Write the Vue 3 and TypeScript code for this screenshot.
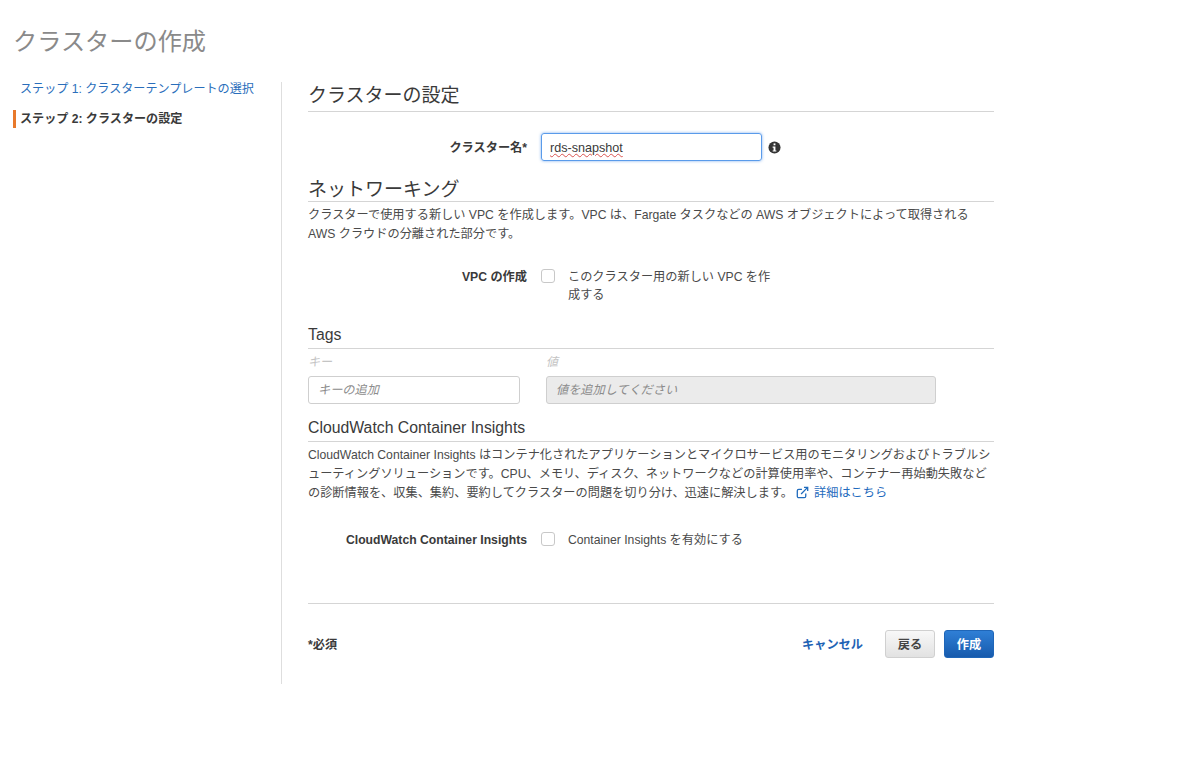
<script setup lang="ts">
import { ref } from 'vue'

const vpcChecked = ref(false)
const insightsChecked = ref(false)
</script>

<template>
  <div class="page">
    <h1 class="page-title">クラスターの作成</h1>
    <div class="wizard">
      <nav class="steps">
        <a class="step link">ステップ 1: クラスターテンプレートの選択</a>
        <div class="step current">ステップ 2: クラスターの設定</div>
      </nav>

      <main class="content">
        <h2 class="section-title first">クラスターの設定</h2>
        <div class="form-row name-row">
          <label class="row-label">クラスター名*</label>
          <div class="name-input"><span class="misspelled">rds-snapshot</span></div>
          <svg class="info" viewBox="0 0 14 14" width="13" height="13">
            <circle cx="7" cy="7" r="6.5" fill="#333" />
            <rect x="6" y="2.6" width="2" height="2" fill="#fff" />
            <path d="M5 6h3v4.2h1v1.2H5v-1.2h1V7.2H5z" fill="#fff" />
          </svg>
        </div>

        <h2 class="section-title network">ネットワーキング</h2>
        <p class="desc">クラスターで使用する新しい VPC を作成します。VPC は、Fargate タスクなどの AWS オブジェクトによって取得される AWS クラウドの分離された部分です。</p>
        <div class="form-row vpc-row">
          <label class="row-label">VPC の作成</label>
          <span class="checkbox" :class="{ on: vpcChecked }" @click="vpcChecked = !vpcChecked"></span>
          <span class="check-text">このクラスター用の新しい VPC を作成する</span>
        </div>

        <h3 class="sub-title tags">Tags</h3>
        <div class="tag-grid">
          <div class="tag-key">
            <div class="tag-label">キー</div>
            <input class="text-input" placeholder="キーの追加" />
          </div>
          <div class="tag-value">
            <div class="tag-label">値</div>
            <input class="text-input" placeholder="値を追加してください" disabled />
          </div>
        </div>

        <h3 class="sub-title insights">CloudWatch Container Insights</h3>
        <p class="desc">CloudWatch Container Insights はコンテナ化されたアプリケーションとマイクロサービス用のモニタリングおよびトラブルシューティングソリューションです。CPU、メモリ、ディスク、ネットワークなどの計算使用率や、コンテナー再始動失敗などの診断情報を、収集、集約、要約してクラスターの問題を切り分け、迅速に解決します。<a class="more"><svg viewBox="0 0 14 14" width="13" height="13" fill="none" stroke="#1f6bbd" stroke-width="1.4">
              <path d="M10.5 8v3a1.6 1.6 0 0 1-1.6 1.6H3A1.6 1.6 0 0 1 1.4 11V5.2A1.6 1.6 0 0 1 3 3.6h3.4" />
              <path d="M5.5 8.6 12 2M8.6 1.4h4v4" />
            </svg><span>詳細はこちら</span></a></p>
        <div class="form-row insights-row">
          <label class="row-label">CloudWatch Container Insights</label>
          <span class="checkbox" :class="{ on: insightsChecked }" @click="insightsChecked = !insightsChecked"></span>
          <span class="check-text">Container Insights を有効にする</span>
        </div>

        <footer class="actions">
          <span class="required">*必須</span>
          <div class="buttons">
            <a class="cancel">キャンセル</a>
            <button class="btn back">戻る</button>
            <button class="btn create">作成</button>
          </div>
        </footer>
      </main>
    </div>
  </div>
</template>

<style>
html, body {
  margin: 0;
  background: #fff;
}
</style>

<style scoped>
.page {
  height: 761px;
  box-sizing: border-box;
  padding: 25px 0 0 14px;
  font-family: "Liberation Sans", "Noto Sans CJK JP", sans-serif;
  font-size: 12.2px;
  color: #444;
  overflow: hidden;
}
.page-title {
  margin: 1px 0 0 -1px;
  font-size: 24.2px;
  line-height: 31px;
  font-weight: 400;
  color: #8a8a8a;
}
.wizard {
  display: flex;
  margin-top: 25px;
}
.steps {
  width: 267px;
  flex: none;
  margin-top: -2px;
  display: flex;
  flex-direction: column;
  gap: 12px;
  font-size: 12.1px;
}
.step {
  line-height: 18px;
  padding-left: 4px;
  border-left: 3px solid transparent;
  margin-left: -1px;
}
.step.link {
  color: #2a6ebb;
}
.step.current {
  font-weight: 700;
  color: #3a3a3a;
  border-left-color: #e8792b;
}
.content {
  width: 686px;
  height: 602px;
  padding: 0 0 0 26px;
  box-sizing: content-box;
  border-left: 1px solid #dedede;
  display: flex;
  flex-direction: column;
}
.section-title {
  margin: 0;
  font-size: 19px;
  line-height: 28px;
  font-weight: 400;
  color: #3a3a3a;
  border-bottom: 1px solid #d5d5d5;
  padding-bottom: 1px;
}
.section-title.network {
  margin-top: 18px;
  line-height: 22px;
  padding-bottom: 0;
}
.form-row {
  display: flex;
  align-items: center;
}
.row-label {
  width: 219px;
  flex: none;
  text-align: right;
  font-weight: 700;
  color: #3a3a3a;
  margin-right: 14px;
}
.name-row {
  margin-top: 21px;
}
.name-input {
  width: 211px;
  height: 26px;
  border: 1px solid #5a9bea;
  border-radius: 3px;
  box-shadow: 0 0 3px rgba(70, 140, 230, .7);
  font-size: 12.6px;
  line-height: 28px;
  padding-left: 8px;
  margin-right: 6px;
  color: #3a3a3a;
}
.misspelled {
  text-decoration: underline wavy #d9534f 1px;
  text-underline-offset: 1px;
}
.info {
  flex: none;
}
.desc {
  margin: 4px 0 0;
  line-height: 18.6px;
  color: #4a4a4a;
  line-break: loose;
}
.vpc-row {
  margin-top: 24.5px;
  align-items: flex-start;
}
.vpc-row .row-label {
  line-height: 18.6px;
}
.checkbox {
  width: 12px;
  height: 12px;
  flex: none;
  border: 1px solid #c8c8c8;
  border-radius: 3px;
  margin-right: 13px;
  margin-top: 1px;
  background: #fff;
}
.check-text {
  width: 206px;
  line-height: 18.6px;
  color: #4a4a4a;
}
.insights-row .check-text {
  width: auto;
}
.sub-title {
  margin: 0;
  font-weight: 400;
  color: #3a3a3a;
  border-bottom: 1px solid #d5d5d5;
}
.sub-title.tags {
  margin-top: 18px;
  font-size: 15.8px;
  line-height: 24px;
  padding-bottom: 1.5px;
}
.sub-title.insights {
  margin-top: 14px;
  font-size: 15.8px;
  line-height: 20px;
  padding-bottom: 3px;
}
.tag-grid {
  display: flex;
  gap: 26px;
  margin-top: 4px;
}
.tag-key {
  width: 212px;
}
.tag-value {
  width: 390px;
}
.tag-label {
  font-size: 12px;
  font-style: italic;
  color: #c4c4c4;
  line-height: 18px;
  margin-bottom: 5px;
}
.text-input {
  display: block;
  width: 100%;
  height: 28px;
  box-sizing: border-box;
  border: 1px solid #cfcfcf;
  border-radius: 3px;
  padding: 0 9px;
  font: italic 12.2px "Liberation Sans", "Noto Sans CJK JP", sans-serif;
  background: #fff;
}
.text-input::placeholder {
  color: #8c8c8c;
  opacity: 1;
}
.text-input:disabled {
  background: #ebebeb;
  border-color: #cfcfcf;
}
.more {
  color: #1f6bbd;
  margin-left: 3px;
  white-space: nowrap;
}
.more svg {
  vertical-align: -2px;
  margin-right: 5px;
}
.insights-row {
  margin-top: 29px;
  align-items: flex-start;
}
.insights-row .row-label {
  line-height: 18.6px;
}
.actions {
  margin-top: 53px;
  border-top: 1px solid #d5d5d5;
  padding-top: 26px;
  display: flex;
  justify-content: space-between;
  align-items: center;
}
.required {
  font-weight: 700;
  color: #3a3a3a;
}
.buttons {
  display: flex;
  align-items: center;
}
.cancel {
  color: #1f63b5;
  font-weight: 700;
  margin-right: 22px;
}
.btn {
  width: 50px;
  height: 28px;
  border-radius: 3px;
  font: 700 12.2px "Liberation Sans", "Noto Sans CJK JP", sans-serif;
  padding: 0;
}
.btn.back {
  background: linear-gradient(#f8f8f8, #e2e2e2);
  border: 1px solid #d0d0d0;
  color: #444;
  margin-right: 9px;
}
.btn.create {
  background: linear-gradient(#2f7fd6, #175bad);
  border: 1px solid #1f66b8;
  color: #fff;
}
</style>
